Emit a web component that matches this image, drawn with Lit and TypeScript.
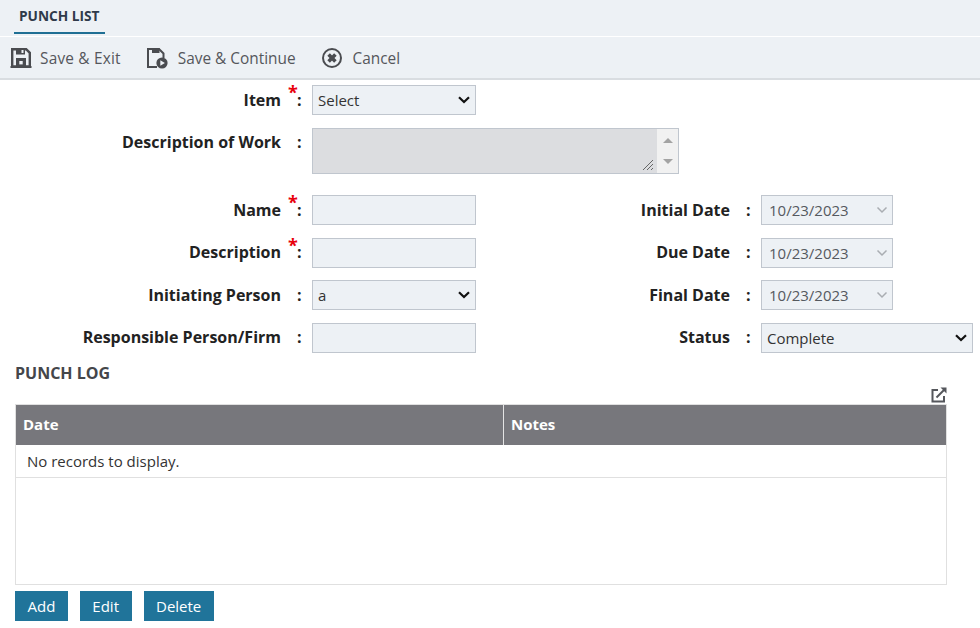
import { LitElement, html, css, svg } from "lit";
import { customElement } from "lit/decorators.js";

const saveIcon = svg`<svg width="22" height="22" viewBox="0 0 22 22"><path fill="none" stroke="#4a4c50" stroke-width="2.4" d="M2.2 19.5V2.2h14l3.6 3.6v13.7z"/><rect x="6" y="2" width="9" height="5.5" fill="#4a4c50"/><rect x="11.5" y="3" width="2" height="3" fill="#edf1f5"/><path fill="#4a4c50" d="M6 11h10v9H6z"/><rect x="9.3" y="14" width="3.4" height="3.4" fill="#edf1f5"/><rect x="0.5" y="19" width="21" height="2" fill="#4a4c50"/></svg>`;
const saveContinueIcon = svg`<svg width="22" height="22" viewBox="0 0 22 22"><path fill="none" stroke="#4a4c50" stroke-width="2" d="M11 20H2V2h11l4.5 4.5V11"/><rect x="6" y="1" width="7.5" height="5" fill="#4a4c50"/><circle cx="16" cy="16" r="5.6" fill="#4a4c50"/><path fill="#edf1f5" d="M14.3 13.2l4.6 2.8-4.6 2.8z"/></svg>`;
const cancelIcon = svg`<svg width="22" height="22" viewBox="0 0 22 22"><circle cx="11" cy="11" r="9" fill="none" stroke="#4a4c50" stroke-width="2"/><path stroke="#4a4c50" stroke-width="3.6" d="M7.6 7.6l6.8 6.8M14.4 7.6l-6.8 6.8"/></svg>`;
const chevron = svg`<svg width="12" height="8" viewBox="0 0 12 8"><path fill="none" stroke="#a9adb2" stroke-width="1.5" d="M1.5 1.5L6 6l4.5-4.5"/></svg>`;
const popout = svg`<svg width="16" height="16" viewBox="0 0 16 16"><path fill="none" stroke="#55575c" stroke-width="2" d="M7 3H1.5v11.5H13V9"/><path fill="none" stroke="#55575c" stroke-width="2" d="M5.5 10.5L13 3"/><path fill="#55575c" d="M9.5 0.5H15.5V6.5z"/></svg>`;

@customElement("app-root")
export class AppRoot extends LitElement {
  static styles = css`
    :host {
      display: block;
      width: 980px;
      height: 628px;
      overflow: hidden;
      background: #fff;
      font-family: "Open Sans", "Liberation Sans", sans-serif;
      font-size: 15px;
      color: #222;
    }
    .tabs {
      height: 36px;
      background: #edf1f5;
      padding-left: 14px;
      border-bottom: 1px solid #fff;
    }
    .tab {
      display: inline-block;
      box-sizing: border-box;
      height: 34px;
      padding: 6px 5px 0;
      border-bottom: 2px solid #1f6f94;
      font-size: 13.7px;
      font-weight: 700;
      color: #2f3a4a;
    }
    .toolbar {
      display: flex;
      align-items: center;
      height: 41px;
      background: #edf1f5;
      border-bottom: 2px solid #d9dde1;
      padding-left: 10px;
      color: #55575c;
      font-size: 15.4px;
    }
    .tool {
      display: flex;
      align-items: center;
      gap: 10px;
      margin-right: 25px;
    }
    .tool span { padding-top: 2px; }
    .tool.first { gap: 8px; }
    .tool.first span { letter-spacing: 0.2px; }
    .form {
      display: grid;
      grid-template-columns: 281px 31px 164px 254px 31px 212px;
      row-gap: 12.5px;
      padding-top: 5px;
    }
    .label, .colon {
      font-weight: 700;
      font-size: 16px;
      line-height: 22px;
      padding-top: 3.5px;
    }
    .label {
      text-align: right;
      color: #222;
    }
    .colon {
      position: relative;
      padding-left: 16px;
    }
    .star {
      position: absolute;
      left: 7px;
      top: -4px;
      color: #e8000b;
      font-size: 18px;
      font-weight: 700;
    }
    .field {
      box-sizing: border-box;
      width: 164px;
      height: 30px;
      border: 1px solid #c0c6ce;
      background: #edf1f5;
      display: block;
    }
    select.field {
      appearance: none;
      font: 15px "Open Sans", sans-serif;
      color: #333;
      padding: 0 0 0 5px;
      border-radius: 0;
      outline: none;
      background-image: url("data:image/svg+xml,%3Csvg xmlns='http://www.w3.org/2000/svg' width='12' height='8' viewBox='0 0 12 8'%3E%3Cpath fill='none' stroke='%23111' stroke-width='2.2' d='M1 1.2L6 6l5-4.8'/%3E%3C/svg%3E");
      background-repeat: no-repeat;
      background-position: right 5px center;
    }
    .wide { width: 212px; }
    .date {
      width: 132px;
      display: flex;
      align-items: center;
      justify-content: space-between;
      padding: 0 4px 0 7px;
      color: #55595f;
      font-size: 15px;
    }
    .area {
      grid-column: 3 / span 2;
      box-sizing: border-box;
      width: 367px;
      height: 46px;
      margin-bottom: 9px;
      border: 1px solid #c0c6ce;
      display: flex;
    }
    .area-body {
      position: relative;
      flex: 1;
      background: #dcdde0;
    }
    .grip {
      position: absolute;
      right: 3px;
      bottom: 2px;
    }
    .bar {
      width: 21px;
      background: #f1f1f1;
      display: flex;
      flex-direction: column;
      align-items: center;
      gap: 16px;
      padding-top: 9px;
    }
    .up, .down {
      width: 0;
      height: 0;
      border-left: 5px solid transparent;
      border-right: 5px solid transparent;
    }
    .up { border-bottom: 5px solid #a3a3a3; }
    .down { border-top: 5px solid #a3a3a3; }
    .log-head {
      display: flex;
      justify-content: space-between;
      align-items: flex-end;
      width: 932px;
      margin-left: 15px;
      padding-top: 9px;
      height: 36.5px;
      box-sizing: border-box;
      position: relative;
    }
    .log-title {
      font-size: 16px;
      font-weight: 700;
      color: #44464a;
      align-self: flex-start;
    }
    .pop {
      position: absolute;
      right: 0;
      top: 34px;
    }
    .grid {
      box-sizing: border-box;
      width: 932px;
      height: 181px;
      margin: 15px 0 0 15px;
      border: 1px solid #e0e0e0;
    }
    .grid-head {
      display: flex;
      height: 40px;
      background: #77777c;
      color: #fff;
      font-weight: 700;
      font-size: 15px;
      line-height: 39px;
    }
    .grid-head div { padding-left: 7px; }
    .grid-head .d { width: 480px; border-right: 1px solid #e4e4e4; }
    .empty {
      height: 33px;
      box-sizing: border-box;
      padding: 6px 0 0 11px;
      font-size: 15px;
      color: #333;
      border-bottom: 1px solid #e0e0e0;
    }
    .btns {
      display: flex;
      gap: 12px;
      margin: 6px 0 0 15px;
    }
    button {
      height: 30px;
      border: none;
      background: #20749a;
      color: #fff;
      font: 15px "Open Sans", sans-serif;
      padding: 0 12.5px;
    }
  `;

  row(label: string, req: boolean, control: unknown) {
    return html`<div class="label">${label}</div>
      <div class="colon">${req ? html`<span class="star">*</span>` : ""}:</div>
      ${control}`;
  }

  date(value: string) {
    return html`<div class="field date"><span>${value}</span>${chevron}</div>`;
  }

  render() {
    return html`
      <div class="tabs"><span class="tab">PUNCH LIST</span></div>
      <div class="toolbar">
        <div class="tool first">${saveIcon}<span>Save &amp; Exit</span></div>
        <div class="tool">${saveContinueIcon}<span>Save &amp; Continue</span></div>
        <div class="tool">${cancelIcon}<span>Cancel</span></div>
      </div>
      <div class="form">
        ${this.row("Item", true, html`<select class="field"><option>Select</option></select><div></div><div></div><div></div>`)}
        ${this.row("Description of Work", false, html`<div class="area">
          <div class="area-body">
            <svg class="grip" width="12" height="12" viewBox="0 0 12 12"><path stroke="#666" stroke-width="1" d="M1 11L11 1M5 11l6-6M9 11l2-2"/></svg>
          </div>
          <div class="bar"><span class="up"></span><span class="down"></span></div>
        </div><div></div><div></div>`)}
        ${this.row("Name", true, html`<div class="field"></div>`)}
        ${this.row("Initial Date", false, this.date("10/23/2023"))}
        ${this.row("Description", true, html`<div class="field"></div>`)}
        ${this.row("Due Date", false, this.date("10/23/2023"))}
        ${this.row("Initiating Person", false, html`<select class="field"><option>a</option></select>`)}
        ${this.row("Final Date", false, this.date("10/23/2023"))}
        ${this.row("Responsible Person/Firm", false, html`<div class="field"></div>`)}
        ${this.row("Status", false, html`<select class="field wide"><option>Complete</option></select>`)}
      </div>
      <div class="log-head">
        <span class="log-title">PUNCH LOG</span>
        <span class="pop">${popout}</span>
      </div>
      <div class="grid">
        <div class="grid-head"><div class="d">Date</div><div>Notes</div></div>
        <div class="empty">No records to display.</div>
      </div>
      <div class="btns">
        <button>Add</button><button>Edit</button><button>Delete</button>
      </div>
    `;
  }
}
